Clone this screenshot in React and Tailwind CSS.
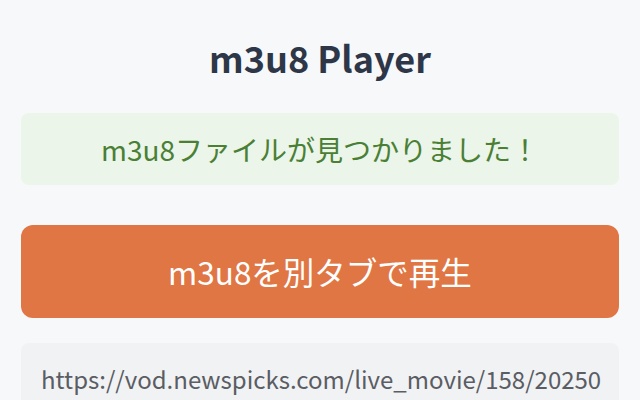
import React from 'react';

const FONT = { fontFamily: '"Noto Sans CJK JP", "Noto Sans", sans-serif' };

function App() {
  const m3u8Url = 'https://vod.newspicks.com/live_movie/158/20250318/index.m3u8';

  return (
    <div className="min-h-screen bg-[#f7f8fa] px-[21px]" style={FONT}>
      <h1 className="pt-[33px] text-center text-[36px] font-bold leading-[48px] text-[#2d3748]">
        m3u8 Player
      </h1>

      {/* found message */}
      <div className="mt-[32px] flex h-[72px] items-center justify-center rounded-lg bg-[#ebf5e9] text-[28px] text-[#4a7f35]">
        m3u8ファイルが見つかりました！
      </div>

      <button
        type="button"
        className="mt-[40px] flex h-[93px] w-full items-center justify-center rounded-[12px] bg-[#e07644] text-[31.5px] text-white"
      >
        m3u8を別タブで再生
      </button>

      {/* url */}
      <div className="mt-[25px] rounded-lg bg-[#f1f2f4] pl-[20px] pr-[12px] pt-[18px] pb-[20px] text-left text-[24px] leading-[36px] break-all text-[#5a5d63]">
        {m3u8Url}
      </div>
    </div>
  );
}

export default App;
